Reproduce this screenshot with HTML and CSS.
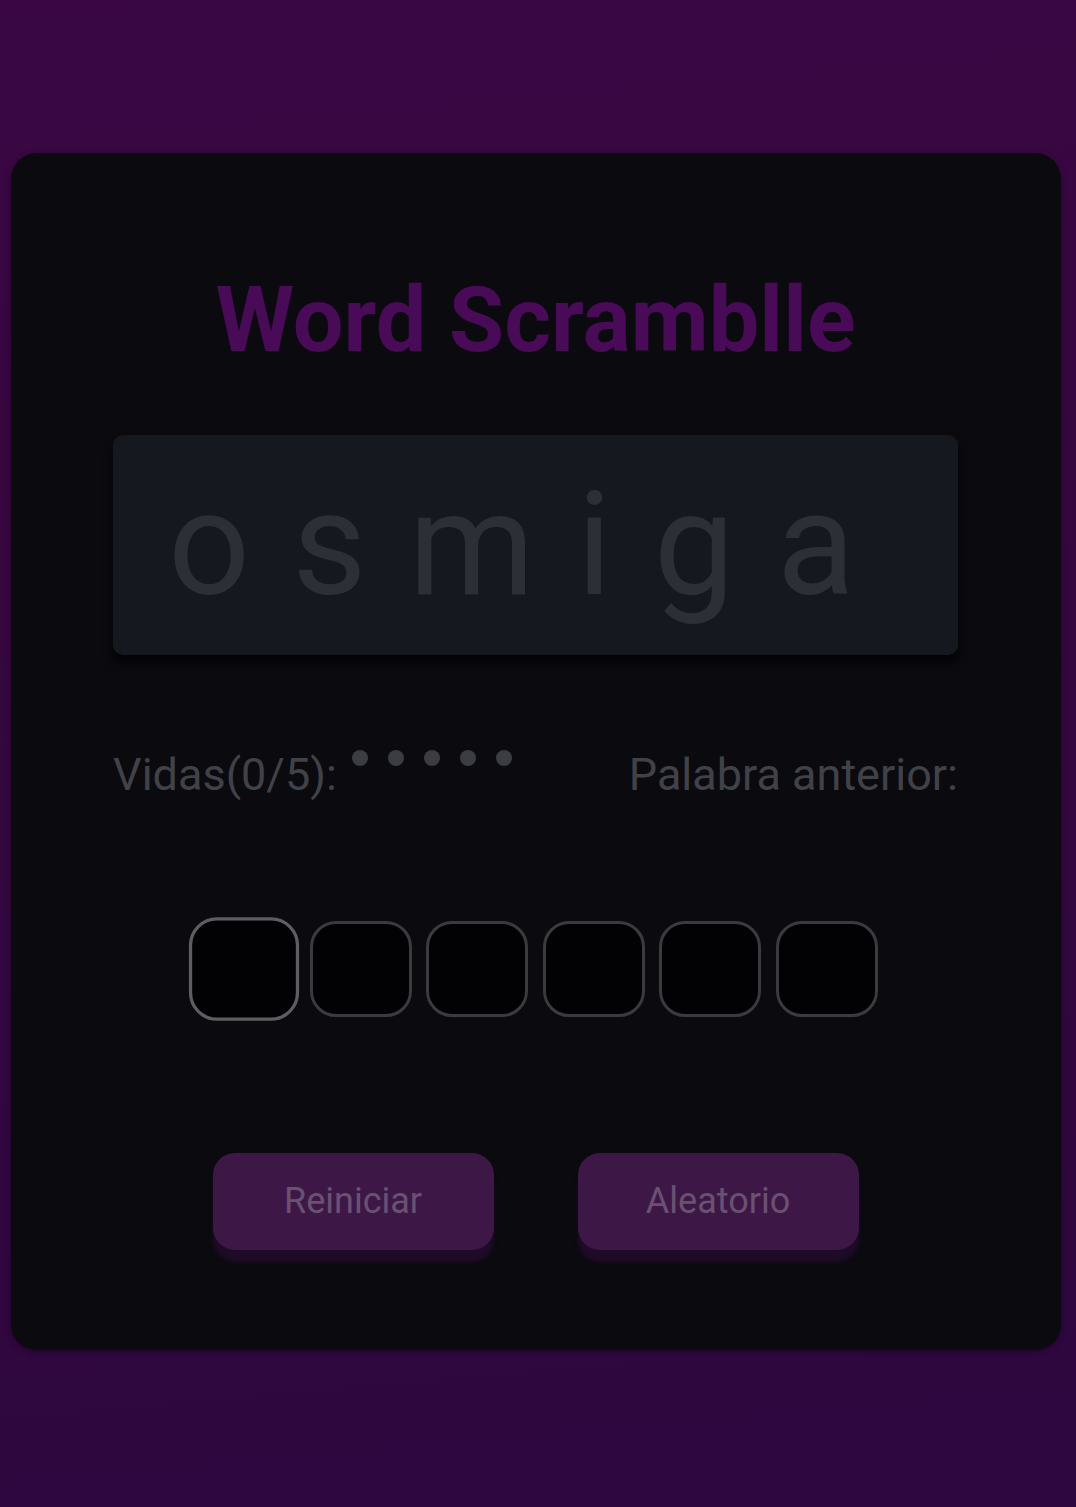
FILE: index.html
```html
<!DOCTYPE html>
<html lang="es">
<head>
<meta charset="utf-8">
<title>Word Scramblle</title>
<link rel="stylesheet" href="styles.css">
</head>
<body>
<main class="card">
  <h1 class="title">Word Scramblle</h1>
  <div class="word-box"><span class="word">osmiga</span></div>
  <div class="stats">
    <div class="lives">
      <span class="label">Vidas(0/5):</span>
      <span class="dots"><i class="dot"></i><i class="dot"></i><i class="dot"></i><i class="dot"></i><i class="dot"></i></span>
    </div>
    <div class="label">Palabra anterior:</div>
  </div>
  <div class="slots">
    <div class="slot slot-active"></div>
    <div class="slot"></div>
    <div class="slot"></div>
    <div class="slot"></div>
    <div class="slot"></div>
    <div class="slot"></div>
  </div>
  <div class="actions">
    <button class="btn">Reiniciar</button>
    <button class="btn">Aleatorio</button>
  </div>
</main>
</body>
</html>
```

FILE: styles.css
```css
html, body {
  margin: 0;
  height: 100%;
}
body {
  background: linear-gradient(175deg, #3a0744 0%, #36073f 40%, #2e0740 100%);
  font-family: Roboto, "Liberation Sans", sans-serif;
  padding: 153px 15px 0 11px;
  box-sizing: border-box;
  min-height: 1507px;
}
.card {
  background: #0a0a0f;
  border-radius: 26px;
  padding: 123px 103px 100px 102px;
  box-sizing: border-box;
  height: 1197px;
  display: flex;
  flex-direction: column;
  box-shadow: 0 2px 6px rgba(0,0,0,0.35);
}
.title {
  margin: 0;
  text-align: center;
  font-size: 90px;
  line-height: 90px;
  font-weight: 700;
  color: #490a58;
}
.word-box {
  margin-top: 69px;
  height: 220px;
  background: #161820;
  border-radius: 10px;
  display: flex;
  align-items: center;
  justify-content: center;
  box-shadow: 0 8px 10px rgba(0,0,0,0.65);
}
.word {
  font-size: 144px;
  line-height: 1;
  letter-spacing: 42px;
  color: #2d2f37;
  font-weight: 400;
  margin-left: -6px;
}
.stats {
  margin-top: 94px;
  display: flex;
  justify-content: space-between;
  align-items: flex-start;
}
.lives {
  display: flex;
  align-items: flex-start;
}
.label {
  font-size: 45px;
  line-height: 52px;
  color: #404248;
}
.dots {
  display: flex;
  gap: 20px;
  margin-left: 15px;
  margin-top: 1px;
}
.dot {
  display: block;
  width: 16px;
  height: 16px;
  border-radius: 50%;
  background: #3b3d43;
}
.slots {
  margin-top: 120px;
  display: flex;
  justify-content: center;
  gap: 14.6px;
}
.slot {
  width: 102px;
  height: 96px;
  box-sizing: border-box;
  border: 3px solid #3a3a3f;
  border-radius: 26px;
  background: #020205;
}
.slot-active {
  border-color: #5e5e62;
  transform: scale(1.08);
}
.actions {
  margin-top: 136px;
  display: flex;
  justify-content: center;
  gap: 84px;
}
.btn {
  width: 281px;
  height: 97px;
  border: none;
  border-radius: 22px;
  background: #3d1847;
  color: #6a5171;
  font-family: Roboto, "Liberation Sans", sans-serif;
  font-size: 36px;
  box-shadow: 0 12px 4px #1f0b27;
  padding: 0 0 2px;
}
```
